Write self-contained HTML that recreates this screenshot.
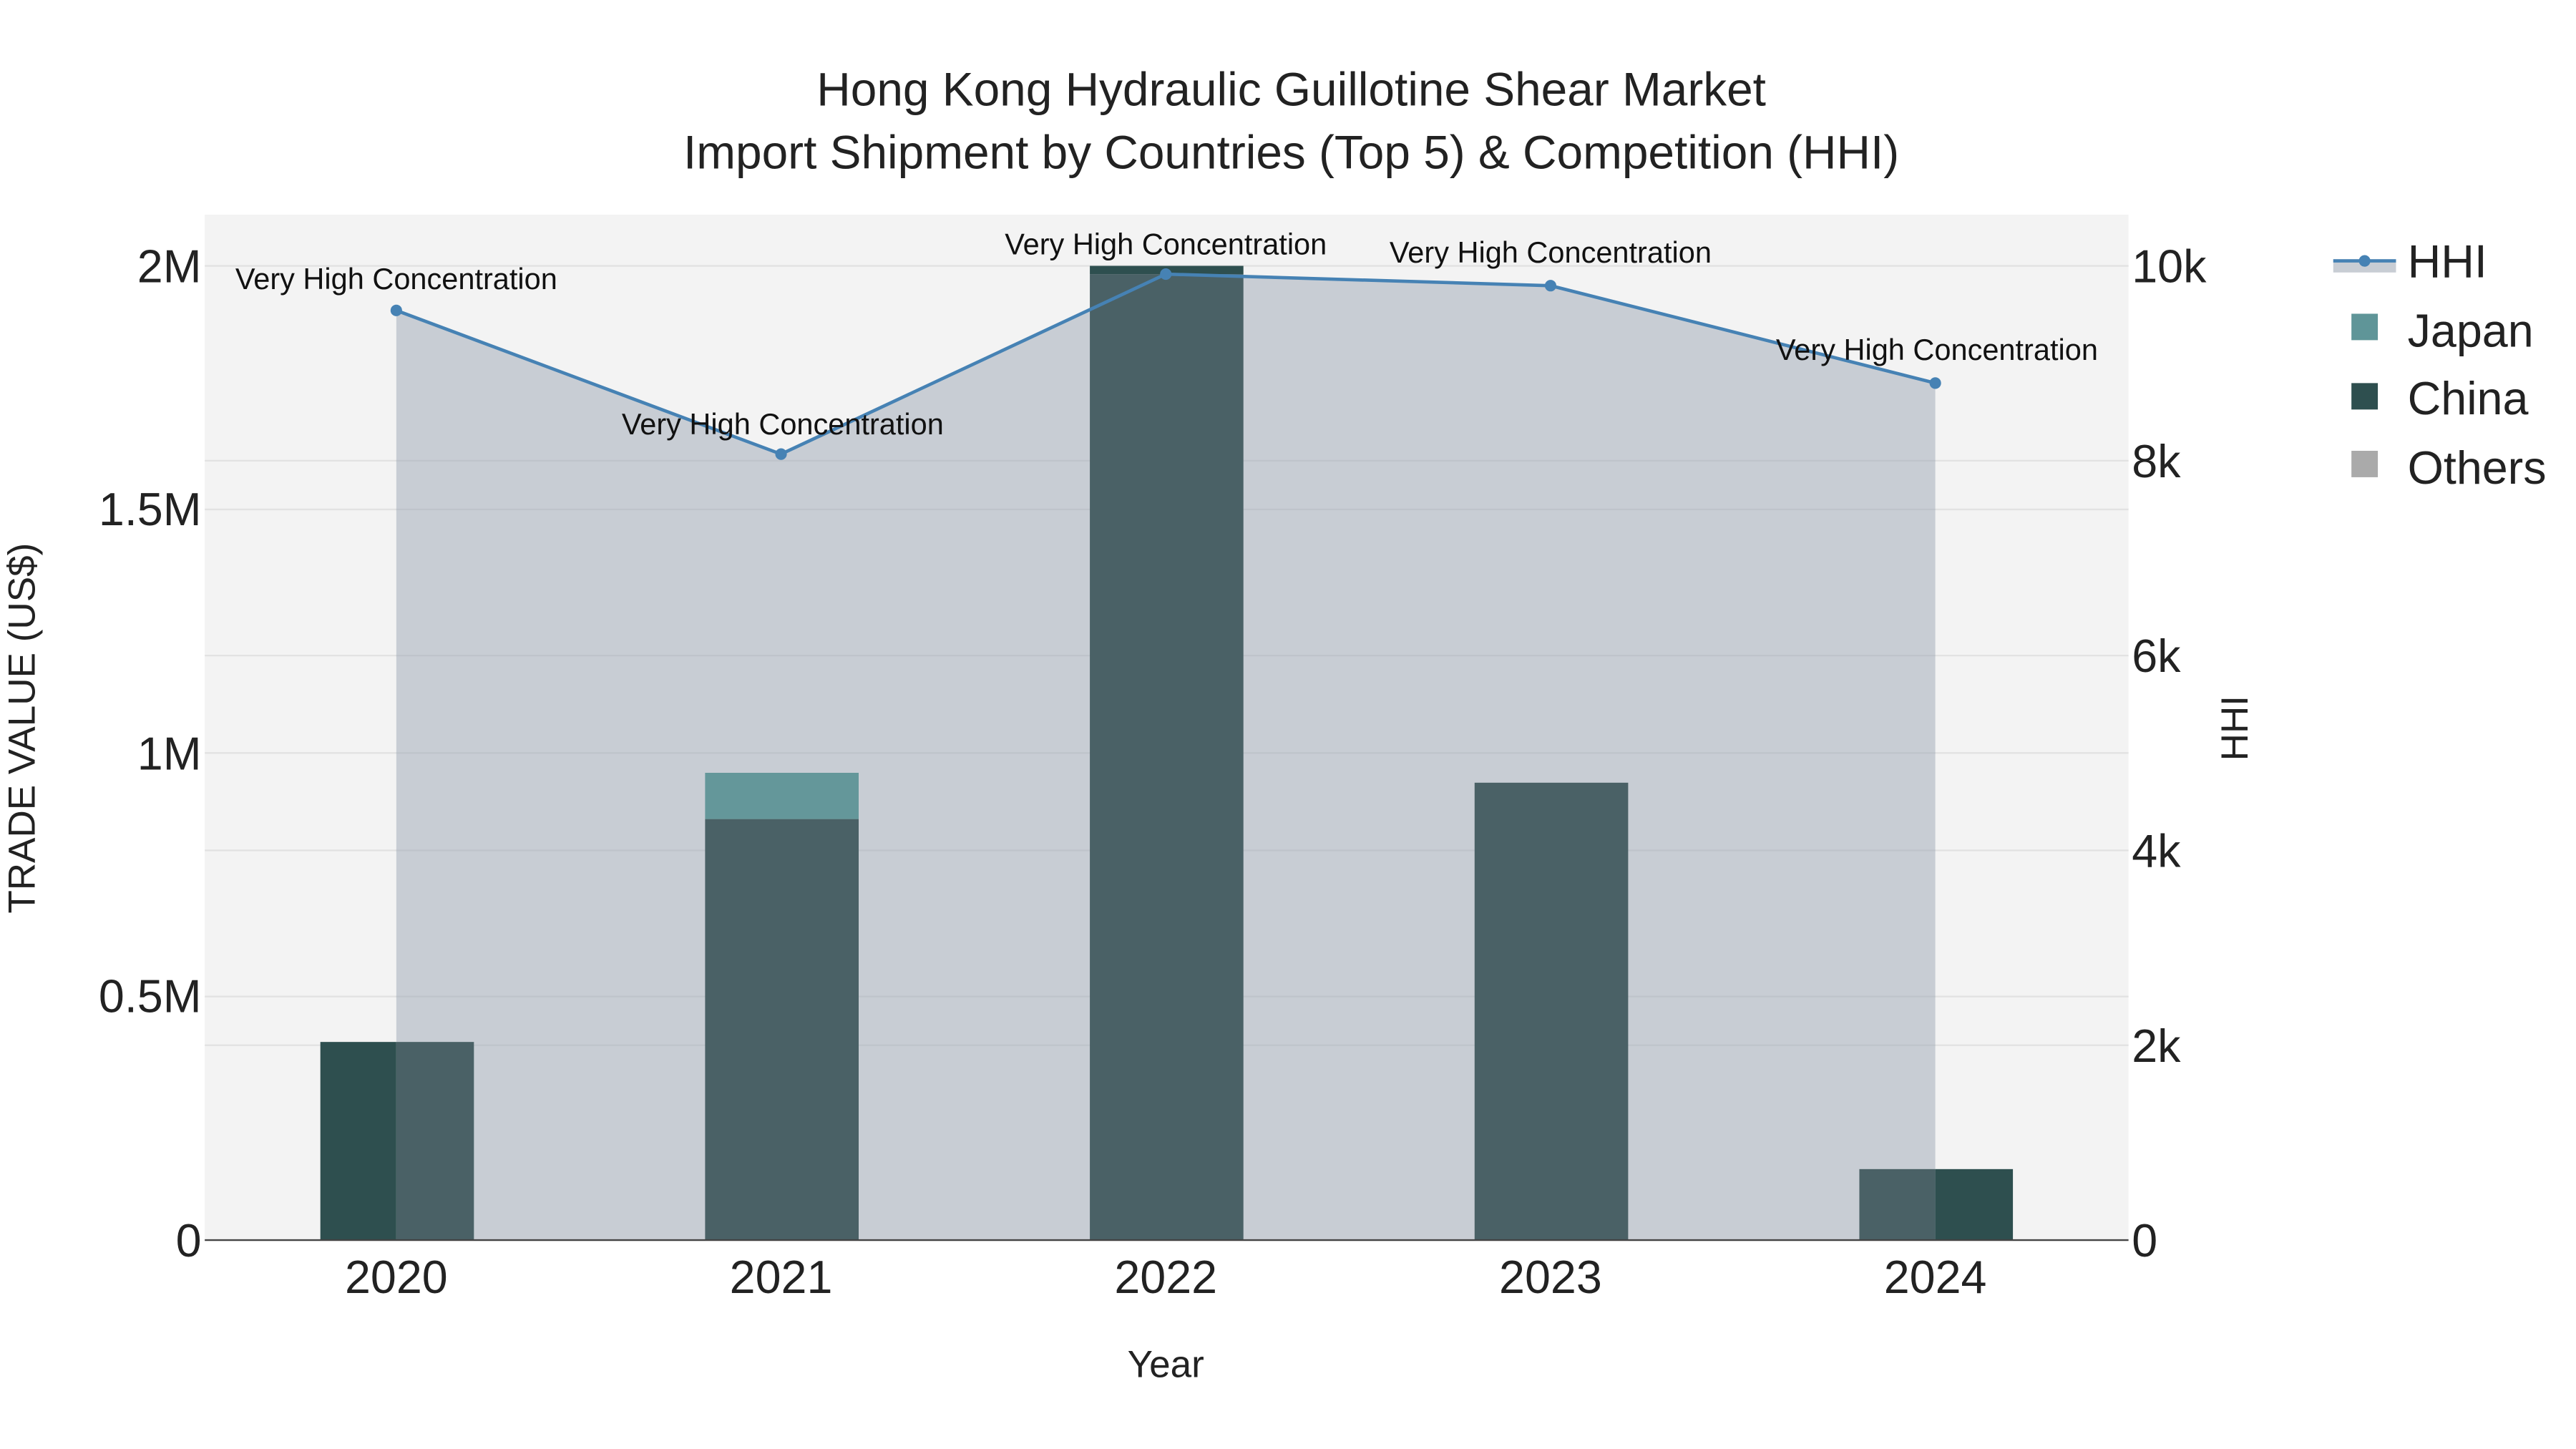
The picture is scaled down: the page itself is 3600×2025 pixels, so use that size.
<!DOCTYPE html>
<html><head><meta charset="utf-8"><style>html,body{margin:0;padding:0;background:#fff}svg{display:block}</style></head>
<body>
<svg width="3600" height="2025" viewBox="0 0 1560 877.5" xmlns="http://www.w3.org/2000/svg" font-family="Liberation Sans, sans-serif">
<rect x="0" y="0" width="1560" height="877.5" fill="#fff"/>
<rect x="124" y="130" width="1165" height="621" fill="#f3f3f3"/>
<g stroke="#e2e2e2" stroke-width="1">
<line x1="124" x2="1289" y1="603.5" y2="603.5"/><line x1="124" x2="1289" y1="456" y2="456"/><line x1="124" x2="1289" y1="308.5" y2="308.5"/><line x1="124" x2="1289" y1="161" y2="161"/>
<line x1="124" x2="1289" y1="633" y2="633"/><line x1="124" x2="1289" y1="515" y2="515"/><line x1="124" x2="1289" y1="397" y2="397"/><line x1="124" x2="1289" y1="279" y2="279"/>
</g>
<polygon points="240,751 240,188 473,275 706,166 939,173 1172,232 1172,751" fill="#c8cdd4"/>
<g stroke="#bfc4cb" stroke-width="1">
<line x1="240" x2="1172" y1="603.5" y2="603.5"/><line x1="240" x2="1172" y1="456" y2="456"/><line x1="240" x2="1172" y1="308.5" y2="308.5"/>
<line x1="240" x2="1172" y1="633" y2="633"/><line x1="240" x2="1172" y1="515" y2="515"/><line x1="240" x2="1172" y1="397" y2="397"/><line x1="240" x2="1172" y1="279" y2="279"/>
</g>
<rect x="194" y="631" width="46" height="120" fill="#2e4f4f"/>
<rect x="240" y="631" width="47" height="120" fill="#4a6166"/>
<rect x="427" y="496" width="93" height="255" fill="#4a6166"/>
<rect x="427" y="468" width="93" height="28" fill="#64979a"/>
<rect x="660" y="161" width="93" height="5" fill="#2e4f4f"/>
<rect x="660" y="166" width="93" height="585" fill="#4a6166"/>
<rect x="893" y="474" width="93" height="277" fill="#4a6166"/>
<rect x="1126" y="708" width="46" height="43" fill="#4a6166"/>
<rect x="1172" y="708" width="47" height="43" fill="#2e4f4f"/>
<line x1="124" x2="1289" y1="751" y2="751" stroke="#444" stroke-width="1"/>
<polyline points="240,188 473,275 706,166 939,173 1172,232" fill="none" stroke="#4682b4" stroke-width="2"/>
<g fill="#4682b4"><circle cx="240" cy="188" r="3.5"/><circle cx="473" cy="275" r="3.5"/><circle cx="706" cy="166" r="3.5"/><circle cx="939" cy="173" r="3.5"/><circle cx="1172" cy="232" r="3.5"/></g>
<g font-size="18" fill="#111" text-anchor="middle">
<text x="240" y="175">Very High Concentration</text>
<text x="474" y="263">Very High Concentration</text>
<text x="706" y="154">Very High Concentration</text>
<text x="939" y="159">Very High Concentration</text>
<text x="1173" y="218">Very High Concentration</text>
</g>
<g font-size="28.5" fill="#222" text-anchor="middle">
<text x="782" y="64">Hong Kong Hydraulic Guillotine Shear Market</text>
<text x="782" y="102">Import Shipment by Countries (Top 5) &amp; Competition (HHI)</text>
</g>
<g font-size="28" fill="#222" text-anchor="end">
<text x="122" y="761">0</text><text x="122" y="613">0.5M</text><text x="122" y="466">1M</text><text x="122" y="318">1.5M</text><text x="122" y="171">2M</text>
</g>
<g font-size="28" fill="#222">
<text x="1291" y="761">0</text><text x="1291" y="643">2k</text><text x="1291" y="525">4k</text><text x="1291" y="407">6k</text><text x="1291" y="289">8k</text><text x="1291" y="171">10k</text>
</g>
<g font-size="28" fill="#222" text-anchor="middle">
<text x="240" y="783">2020</text><text x="473" y="783">2021</text><text x="706" y="783">2022</text><text x="939" y="783">2023</text><text x="1172" y="783">2024</text>
</g>
<text x="706" y="834" font-size="23" fill="#222" text-anchor="middle">Year</text>
<text transform="translate(21,441) rotate(-90)" font-size="23" fill="#222" text-anchor="middle">TRADE VALUE (US$)</text>
<text transform="translate(1361,441) rotate(-90)" font-size="23" fill="#222" text-anchor="middle">HHI</text>
<g>
<rect x="1413" y="157" width="38" height="8" fill="#c8cdd4"/>
<line x1="1413" x2="1451" y1="158" y2="158" stroke="#4682b4" stroke-width="2"/>
<circle cx="1432" cy="158" r="3.5" fill="#4682b4"/>
<rect x="1424" y="190" width="16" height="16" fill="#5f9598"/>
<rect x="1424" y="232" width="16" height="16" fill="#2e4f4f"/>
<rect x="1424" y="273" width="16" height="16" fill="#aaaaaa"/>
<g font-size="28" fill="#222">
<text x="1458" y="168">HHI</text><text x="1458" y="210">Japan</text><text x="1458" y="251">China</text><text x="1458" y="293">Others</text>
</g>
</g>
</svg>
</body></html>
